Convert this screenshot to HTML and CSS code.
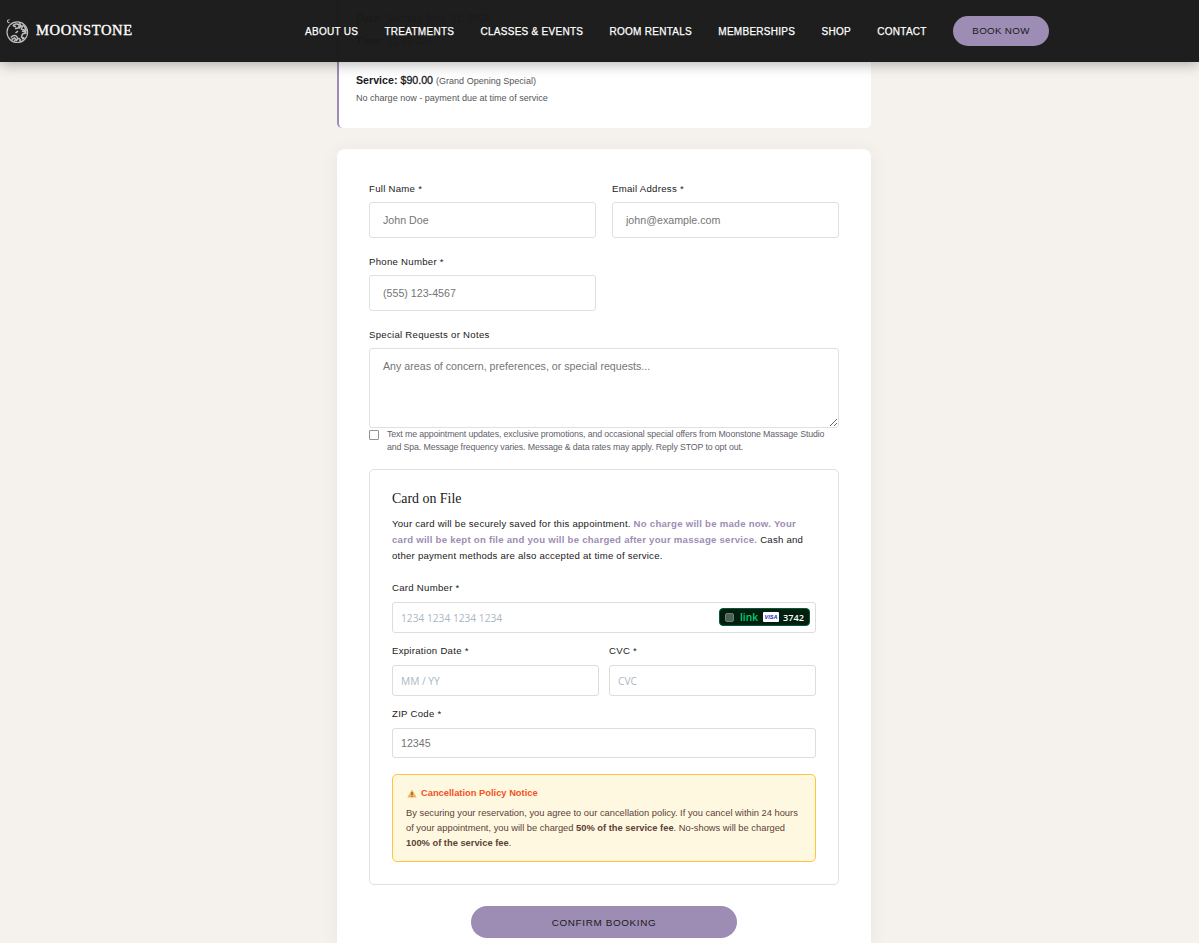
FILE: index.html
```html
<!DOCTYPE html>
<html lang="en">
<head>
    <meta charset="UTF-8">
    <meta name="viewport" content="width=device-width, initial-scale=1.0">
    <title>Moonstone - Confirm Booking</title>
    <link rel="stylesheet" href="styles.css">
</head>
<body>
    <header class="header">
        <a class="logo" href="#">
            <svg class="logo-icon" viewBox="0 0 24 26" fill="none" stroke="#bdbdbd">
                <circle cx="12.300" cy="14.200" r="10.300" stroke-width="1.200"/>
                <path d="M4.600 1.800C1.800 1.400 1.600 4.800 4.400 4.600" stroke-width="1.100"/>
                <path d="M8 7.800c1-2 5-2.300 6-.6s-1.600 3.600-4 3.200M8 7.800l3 1M14.500 5l1.500 3-2 2.600M17.500 7.500l-1 3.500 3 1 1.500 3-3.500 1-1 3 3 1.500M18 6.500l2 3 1.500 4M17 13l3 1" stroke-width="1.500"/>
                <path d="M6 19.500c1.500-2.500 5-2.500 6-.5s1 2.500-1 4M6.500 21.500l3-1.500 1.500 1.500-2 1.500M13.500 20l2 2-1 1.500M17 21l2-1M10.500 15l2.500-1.800" stroke-width="1.500"/>
            </svg>
            <span class="logo-text">MOONSTONE</span>
        </a>
        <nav class="nav">
            <a href="#">ABOUT US</a>
            <a href="#">TREATMENTS</a>
            <a href="#">CLASSES &amp; EVENTS</a>
            <a href="#">ROOM RENTALS</a>
            <a href="#">MEMBERSHIPS</a>
            <a href="#">SHOP</a>
            <a href="#">CONTACT</a>
            <a href="#" class="btn-book">BOOK NOW</a>
        </nav>
    </header>

    <main class="container">
        <section class="summary">
            <p><strong>Date:</strong> Sunday, May 31, 2026</p>
            <p><strong>Time:</strong> 11:30 AM</p>
            <p class="summary-price"><strong>Service:</strong> <span class="price">$90.00</span> <small>(Grand Opening Special)</small></p>
            <p class="summary-note">No charge now - payment due at time of service</p>
        </section>

        <form class="booking-form">
            <div class="form-row">
                <div class="form-group">
                    <label for="name">Full Name *</label>
                    <input type="text" id="name" placeholder="John Doe">
                </div>
                <div class="form-group">
                    <label for="email">Email Address *</label>
                    <input type="email" id="email" placeholder="john@example.com">
                </div>
                <div class="form-group">
                    <label for="phone">Phone Number *</label>
                    <input type="tel" id="phone" placeholder="(555) 123-4567">
                </div>
            </div>
            <div class="form-group">
                <label for="notes">Special Requests or Notes</label>
                <textarea id="notes" placeholder="Any areas of concern, preferences, or special requests..."></textarea>
            </div>
            <div class="sms">
                <input type="checkbox" id="sms">
                <label for="sms">Text me appointment updates, exclusive promotions, and occasional special offers from Moonstone Massage Studio<br>and Spa. Message frequency varies. Message &amp; data rates may apply. Reply STOP to opt out.</label>
            </div>

            <section class="payment">
                <h2>Card on File</h2>
                <p class="payment-text">Your card will be securely saved for this appointment. <strong>No charge will be made now. Your<br>card will be kept on file and you will be charged after your massage service.</strong> Cash and<br>other payment methods are also accepted at time of service.</p>

                <label>Card Number *</label>
                <div class="card-field">
                    <span class="placeholder">1234 1234 1234 1234</span>
                    <span class="link-badge">
                        <span class="link-box"></span>
                        <span class="link-name">link</span>
                        <span class="visa">VISA</span>
                        <span class="digits">3742</span>
                    </span>
                </div>
                <div class="card-row">
                    <div>
                        <label>Expiration Date *</label>
                        <div class="card-field"><span class="placeholder">MM / YY</span></div>
                    </div>
                    <div>
                        <label>CVC *</label>
                        <div class="card-field"><span class="placeholder">CVC</span></div>
                    </div>
                </div>
                <label for="zip">ZIP Code *</label>
                <input type="text" id="zip" class="zip" placeholder="12345">

                <div class="notice">
                    <h3>
                        <svg class="warning" viewBox="0 0 10 9">
                            <path d="M5 .4L9.700 8.600H.3z" fill="#f9b25a"/>
                            <path d="M5 3v3M5 6.800v1" stroke="#4a3a35" stroke-width="1"/>
                        </svg>
                        Cancellation Policy Notice
                    </h3>
                    <p>By securing your reservation, you agree to our cancellation policy. If you cancel within 24 hours<br>of your appointment, you will be charged <strong>50% of the service fee</strong>. No-shows will be charged<br><strong>100% of the service fee</strong>.</p>
                </div>
            </section>

            <button type="button" class="btn-confirm">CONFIRM BOOKING</button>
        </form>
    </main>
</body>
</html>
```
FILE: styles.css
```css
* {
    box-sizing: border-box;
    margin: 0;
    padding: 0;
}
body {
    font-family: "Liberation Sans", Arial, sans-serif;
    background-color: #f5f1ec;
    color: #1a1a1a;
}
.header {
    position: sticky;
    top: 0;
    z-index: 10;
    display: flex;
    align-items: center;
    justify-content: space-between;
    height: 62px;
    padding: 0 150px 0 5px;
    background-color: rgba(26, 26, 26, 0.98);
    box-shadow: 0 2px 13px rgba(0, 0, 0, 0.3);
}
.header a {
    color: #fff;
    text-decoration: none;
}
.header .logo {
    display: flex;
    align-items: center;
    gap: 7px;
    padding-bottom: 1px;
}
.logo-icon {
    width: 24px;
    height: 26px;
}
.logo-text {
    font-family: "Liberation Serif", serif;
    font-size: 14.6px;
    letter-spacing: 0.6px;
    -webkit-text-stroke: 0.35px #fff;
}
.nav {
    display: flex;
    align-items: center;
    gap: 26.3px;
    font-size: 10px;
    letter-spacing: 0.27px;
    -webkit-text-stroke: 0.25px #fff;
}
.header .btn-book {
    width: 96px;
    height: 30px;
    line-height: 29px;
    border-radius: 15px;
    background-color: #9d8db5;
    color: #1a1a1a;
    font-size: 9.8px;
    letter-spacing: 0.3px;
    text-align: center;
    -webkit-text-stroke: 0;
}
.container {
    width: 534px;
    margin: -62px 0 0 337px;
}
.summary {
    height: 128px;
    padding: 7px 16px 0 17px;
    border-left: 2px solid #9d8db5;
    border-radius: 0 0 5px 5px;
    background-color: #fff;
    font-size: 10.67px;
    line-height: 23px;
}
.summary-price {
    margin-top: 16px;
}
.price {
    -webkit-text-stroke: 0.3px #1a1a1a;
}
.summary small,
.summary-note {
    font-size: 9.04px;
    color: #555;
}
.summary-note {
    line-height: 11px;
}
.booking-form {
    height: 794px;
    margin-top: 21px;
    padding: 32px 32px 0;
    border-radius: 8px 8px 0 0;
    background-color: #fff;
    box-shadow: 0 3px 20px rgba(0, 0, 0, 0.06);
}
.form-row {
    display: grid;
    grid-template-columns: 1fr 1fr;
    column-gap: 16px;
}
.form-group {
    margin-bottom: 16px;
}
.form-row .form-group {
    height: 57px;
}
label {
    display: block;
    height: 21px;
    line-height: 15px;
    font-size: 9.6px;
    letter-spacing: 0.28px;
    color: #1a1a1a;
}
input,
textarea {
    display: block;
    width: 100%;
    height: 36px;
    padding: 0 13px;
    border: 1px solid #e0e0e0;
    border-radius: 3px;
    background-color: #fff;
    font-family: inherit;
    font-size: 10.67px;
}
::placeholder {
    color: #757575;
}
textarea {
    height: 80px;
    padding: 11px 13px;
}
.form-group:has(textarea) {
    margin-bottom: 0;
}
.sms {
    display: flex;
    gap: 8px;
    height: 41px;
}
.sms input {
    flex: none;
    width: 10px;
    height: 10px;
    margin-top: 2px;
    padding: 0;
    border: 1px solid #949494;
    border-radius: 1px;
    appearance: none;
}
.sms label {
    line-height: 13px;
    font-size: 8.8px;
    letter-spacing: -0.13px;
    color: #5f5f6b;
    white-space: nowrap;
}
.payment {
    height: 416px;
    padding: 20px 22px;
    border: 1px solid #e0e0e0;
    border-radius: 5px;
}
.payment h2 {
    font-family: "Liberation Serif", serif;
    font-size: 13.9px;
    font-weight: normal;
    line-height: 17px;
}
.payment-text {
    margin: 9px 0 16px;
    font-size: 9.6px;
    line-height: 16px;
    letter-spacing: 0.23px;
    white-space: nowrap;
}
.payment-text strong {
    color: #9d8db5;
    letter-spacing: 0.25px;
}
.payment label {
    height: 22px;
}
.card-field {
    display: flex;
    align-items: center;
    justify-content: space-between;
    height: 31px;
    margin-bottom: 10px;
    padding: 0 5px 0 8px;
    border: 1px solid #ddd;
    border-radius: 3px;
}
.placeholder {
    font-family: "Open Sans", sans-serif;
    font-size: 10.2px;
    color: #aab7c4;
}
.link-badge {
    display: flex;
    align-items: center;
    width: 91px;
    height: 18px;
    margin-bottom: 1px;
    padding-left: 5px;
    border: 1px solid #005b38;
    border-radius: 4px;
    background-color: #011e0f;
}
.link-box {
    width: 9px;
    height: 9px;
    border: 1px solid #6f8077;
    border-radius: 2px;
    background-color: #4d6257;
}
.link-name {
    width: 29px;
    padding-left: 6px;
    font-family: "Open Sans", sans-serif;
    font-size: 10.2px;
    font-weight: 600;
    line-height: 16px;
    color: #00d66f;
}
.visa {
    width: 16px;
    height: 10px;
    border-radius: 1px;
    background-color: #fff;
    color: #1a1fc0;
    font-size: 5.5px;
    font-style: italic;
    font-weight: bold;
    line-height: 10px;
    text-align: center;
}
.digits {
    padding-left: 4px;
    font-family: "Open Sans", sans-serif;
    font-size: 9.2px;
    font-weight: 600;
    color: #fff;
}
.card-row {
    display: grid;
    grid-template-columns: 1fr 1fr;
    gap: 10px;
}
.zip {
    height: 30px;
    padding: 0 8px;
    border-color: #ddd;
}
.notice {
    height: 88px;
    margin-top: 16px;
    padding: 11px 13px;
    border: 1px solid #ffc43a;
    border-radius: 5px;
    background-color: #fff8e1;
    color: #5d4037;
}
.notice h3 {
    display: flex;
    align-items: center;
    gap: 4px;
    height: 14px;
    padding-left: 1px;
    font-size: 9.33px;
    color: #f4511e;
}
.warning {
    width: 10px;
    height: 9px;
}
.notice p {
    margin-top: 6px;
    font-size: 9.33px;
    line-height: 15px;
    white-space: nowrap;
}
.btn-confirm {
    display: block;
    width: 266px;
    height: 32px;
    margin: 21px auto 0;
    border: none;
    border-radius: 16px;
    background-color: #9d8db5;
    color: #1a1a1a;
    font-family: inherit;
    font-size: 9.9px;
    letter-spacing: 0.65px;
    cursor: pointer;
}
```
